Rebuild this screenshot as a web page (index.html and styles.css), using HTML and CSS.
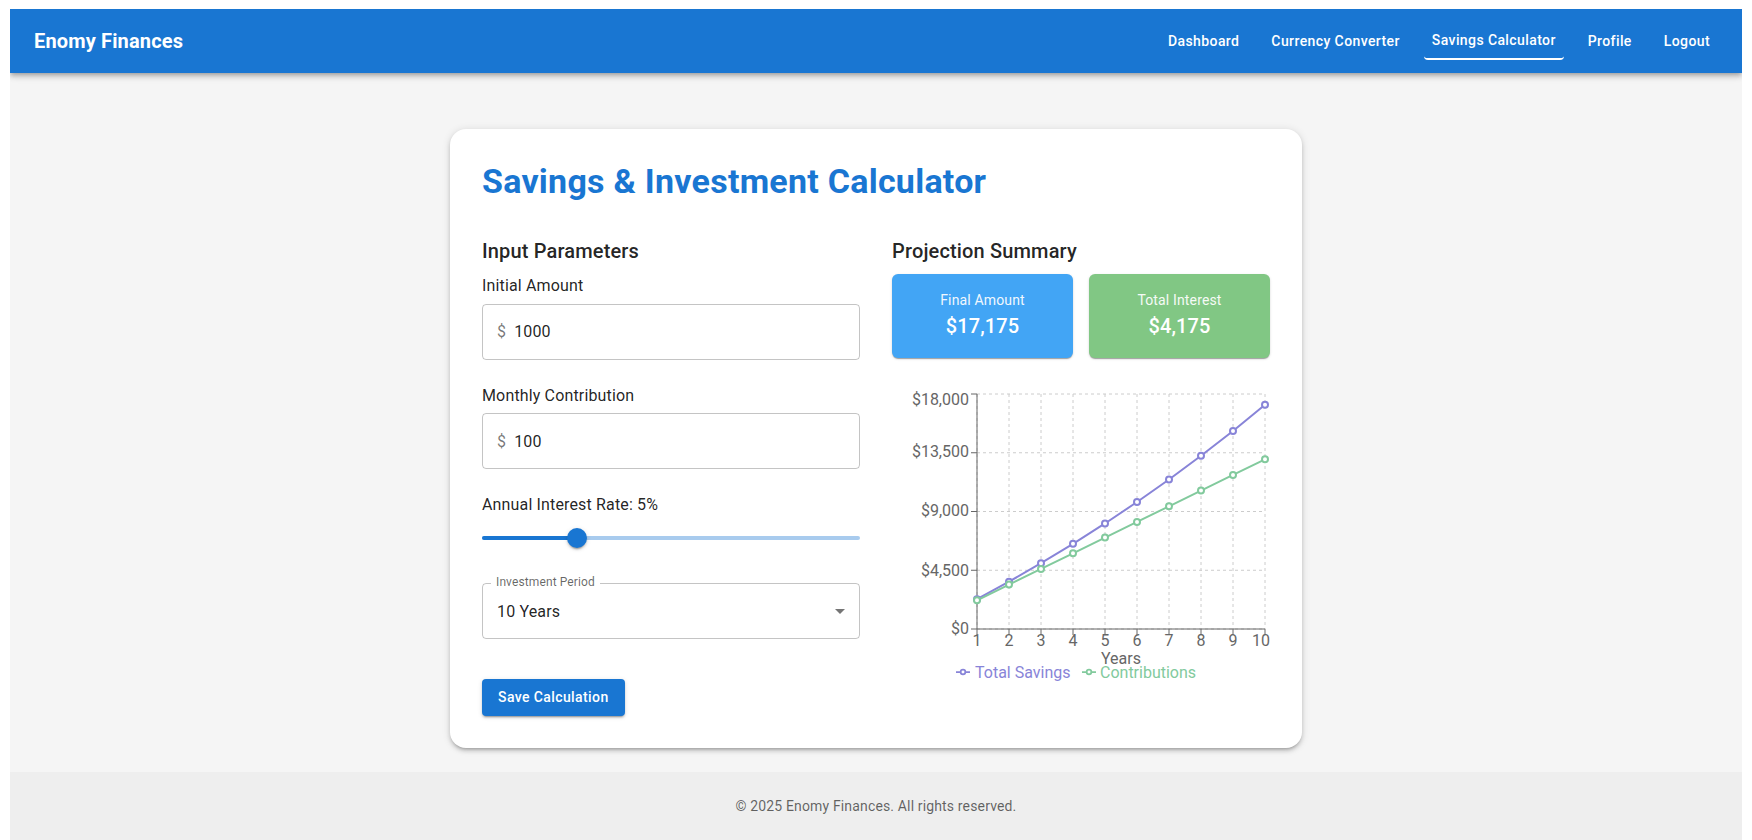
FILE: index.html
```html
<!DOCTYPE html>
<html lang="en">
<head>
<meta charset="utf-8">
<title>Enomy Finances - Savings Calculator</title>
<link rel="stylesheet" href="styles.css">
</head>
<body>
<div class="page">
  <header class="appbar">
    <div class="brand">Enomy Finances</div>
    <nav class="nav">
      <a class="nav-btn">Dashboard</a>
      <a class="nav-btn">Currency Converter</a>
      <a class="nav-btn active">Savings Calculator</a>
      <a class="nav-btn">Profile</a>
      <a class="nav-btn">Logout</a>
    </nav>
  </header>

  <main class="main">
    <section class="card">
      <h1 class="title">Savings &amp; Investment Calculator</h1>
      <div class="cols">
        <div class="col">
          <h2 class="section-title">Input Parameters</h2>

          <div class="field">
            <p class="field-label">Initial Amount</p>
            <div class="input"><span class="adorn">$</span><span class="value">1000</span></div>
          </div>

          <div class="field">
            <p class="field-label">Monthly Contribution</p>
            <div class="input"><span class="adorn">$</span><span class="value">100</span></div>
          </div>

          <div class="field">
            <p class="field-label">Annual Interest Rate: 5%</p>
            <div class="slider">
              <span class="rail"></span>
              <span class="track" style="width:25%"></span>
              <span class="thumb" style="left:25%"></span>
            </div>
          </div>

          <div class="select">
            <span class="select-label">Investment Period</span>
            <span class="value">10 Years</span>
            <svg class="select-arrow" width="24" height="24" viewBox="0 0 24 24"><path d="M7 10l5 5 5-5z"/></svg>
          </div>

          <button class="save-btn">Save Calculation</button>
        </div>

        <div class="col">
          <h2 class="section-title">Projection Summary</h2>
          <div class="summary">
            <div class="stat stat-blue">
              <div class="stat-label">Final Amount</div>
              <div class="stat-value">$17,175</div>
            </div>
            <div class="stat stat-green">
              <div class="stat-label">Total Interest</div>
              <div class="stat-value">$4,175</div>
            </div>
          </div>

          <svg class="chart" width="378" height="310" viewBox="0 0 378 310">
            <g class="grid">
              <line x1="85" y1="20" x2="373" y2="20"/>
              <line x1="85" y1="78.75" x2="373" y2="78.75"/>
              <line x1="85" y1="137.5" x2="373" y2="137.5"/>
              <line x1="85" y1="196.25" x2="373" y2="196.25"/>
              <line x1="85" y1="255" x2="373" y2="255"/>
              <line x1="85" y1="20" x2="85" y2="255"/>
              <line x1="117" y1="20" x2="117" y2="255"/>
              <line x1="149" y1="20" x2="149" y2="255"/>
              <line x1="181" y1="20" x2="181" y2="255"/>
              <line x1="213" y1="20" x2="213" y2="255"/>
              <line x1="245" y1="20" x2="245" y2="255"/>
              <line x1="277" y1="20" x2="277" y2="255"/>
              <line x1="309" y1="20" x2="309" y2="255"/>
              <line x1="341" y1="20" x2="341" y2="255"/>
              <line x1="373" y1="20" x2="373" y2="255"/>
            </g>
            <g class="axis">
              <line x1="85" y1="20" x2="85" y2="255"/>
              <line x1="85" y1="255" x2="373" y2="255"/>
              <line x1="79" y1="20" x2="85" y2="20"/>
              <line x1="79" y1="78.75" x2="85" y2="78.75"/>
              <line x1="79" y1="137.5" x2="85" y2="137.5"/>
              <line x1="79" y1="196.25" x2="85" y2="196.25"/>
              <line x1="79" y1="255" x2="85" y2="255"/>
              <line x1="85" y1="255" x2="85" y2="261"/>
              <line x1="117" y1="255" x2="117" y2="261"/>
              <line x1="149" y1="255" x2="149" y2="261"/>
              <line x1="181" y1="255" x2="181" y2="261"/>
              <line x1="213" y1="255" x2="213" y2="261"/>
              <line x1="245" y1="255" x2="245" y2="261"/>
              <line x1="277" y1="255" x2="277" y2="261"/>
              <line x1="309" y1="255" x2="309" y2="261"/>
              <line x1="341" y1="255" x2="341" y2="261"/>
              <line x1="373" y1="255" x2="373" y2="261"/>
            </g>
            <g class="tick-y">
              <text x="77" y="30.5">$18,000</text>
              <text x="77" y="83">$13,500</text>
              <text x="77" y="142">$9,000</text>
              <text x="77" y="201.5">$4,500</text>
              <text x="77" y="259.5">$0</text>
            </g>
            <g class="tick-x">
              <text x="85" y="272">1</text>
              <text x="117" y="272">2</text>
              <text x="149" y="272">3</text>
              <text x="181" y="272">4</text>
              <text x="213" y="272">5</text>
              <text x="245" y="272">6</text>
              <text x="277" y="272">7</text>
              <text x="309" y="272">8</text>
              <text x="341" y="272">9</text>
              <text x="369" y="272">10</text>
            </g>
            <text class="axis-label" x="229" y="289.5">Years</text>

            <polyline class="series-savings" points="85,225.24 117,207.69 149,189.24 181,169.85 213,149.46 245,128.03 277,105.5 309,81.82 341,56.93 373,30.77"/>
            <g class="dots-savings">
              <circle cx="85" cy="225.24" r="3"/>
              <circle cx="117" cy="207.69" r="3"/>
              <circle cx="149" cy="189.24" r="3"/>
              <circle cx="181" cy="169.85" r="3"/>
              <circle cx="213" cy="149.46" r="3"/>
              <circle cx="245" cy="128.03" r="3"/>
              <circle cx="277" cy="105.5" r="3"/>
              <circle cx="309" cy="81.82" r="3"/>
              <circle cx="341" cy="56.93" r="3"/>
              <circle cx="373" cy="30.77" r="3"/>
            </g>
            <polyline class="series-contrib" points="85,226.28 117,210.61 149,194.94 181,179.28 213,163.61 245,147.94 277,132.28 309,116.61 341,100.94 373,85.28"/>
            <g class="dots-contrib">
              <circle cx="85" cy="226.28" r="3"/>
              <circle cx="117" cy="210.61" r="3"/>
              <circle cx="149" cy="194.94" r="3"/>
              <circle cx="181" cy="179.28" r="3"/>
              <circle cx="213" cy="163.61" r="3"/>
              <circle cx="245" cy="147.94" r="3"/>
              <circle cx="277" cy="132.28" r="3"/>
              <circle cx="309" cy="116.61" r="3"/>
              <circle cx="341" cy="100.94" r="3"/>
              <circle cx="373" cy="85.28" r="3"/>
            </g>

            <g class="legend">
              <path class="legend-icon-savings" d="M64,298h4.67a2.33,2.33,0,1,1,4.67,0H78M73.33,298a2.33,2.33,0,1,1,-4.67,0"/>
              <text class="legend-savings" x="83" y="303.5">Total Savings</text>
              <path class="legend-icon-contrib" d="M190,298h4.67a2.33,2.33,0,1,1,4.67,0H204M199.33,298a2.33,2.33,0,1,1,-4.67,0"/>
              <text class="legend-contrib" x="208" y="303.5">Contributions</text>
            </g>
          </svg>
        </div>
      </div>
    </section>
  </main>

  <footer class="footer">© 2025 Enomy Finances. All rights reserved.</footer>
</div>
</body>
</html>
```

FILE: styles.css
```css
body {
  margin: 9px 10px;
  font-family: Roboto, "Liberation Sans", Arial, sans-serif;
  color: rgba(0, 0, 0, 0.87);
  background: #fff;
}

.page {
  display: flex;
  flex-direction: column;
}

/* ---------- App bar ---------- */
.appbar {
  position: relative;
  z-index: 1;
  height: 64px;
  display: flex;
  align-items: center;
  padding: 0 24px;
  background: #1976d2;
  color: #fff;
  box-shadow: 0px 2px 4px -1px rgba(0,0,0,0.2), 0px 4px 5px 0px rgba(0,0,0,0.14), 0px 1px 10px 0px rgba(0,0,0,0.12);
}

.brand {
  flex: 1;
  font-size: 20px;
  font-weight: 700;
  line-height: 1.6;
  letter-spacing: 0.0075em;
}

.nav {
  display: flex;
  align-items: center;
  gap: 16px;
}

.nav-btn {
  display: block;
  padding: 6px 8px;
  border-radius: 4px;
  font-size: 14px;
  font-weight: 500;
  line-height: 1.75;
  letter-spacing: 0.02857em;
  color: #fff;
  cursor: pointer;
}

.nav-btn.active {
  border-bottom: 2px solid #fff;
}

/* ---------- Main ---------- */
.main {
  background: #f5f5f5;
  padding: 56px 24px 24px;
  display: flex;
  justify-content: center;
}

.card {
  width: 852px;
  box-sizing: border-box;
  padding: 32px;
  background: #fff;
  border-radius: 16px;
  box-shadow: 0px 3px 3px -2px rgba(0,0,0,0.2), 0px 3px 4px 0px rgba(0,0,0,0.14), 0px 1px 8px 0px rgba(0,0,0,0.12);
}

.title {
  margin: 0 0 32px;
  font-size: 34px;
  font-weight: 700;
  line-height: 1.235;
  letter-spacing: 0.00735em;
  color: #1976d2;
}

.cols {
  display: grid;
  grid-template-columns: 1fr 1fr;
  column-gap: 32px;
}

.col {
  display: flex;
  flex-direction: column;
  min-width: 0;
}

.section-title {
  margin: 0 0 7px;
  font-size: 20px;
  font-weight: 500;
  line-height: 1.6;
  letter-spacing: 0.0075em;
}

.field {
  display: flex;
  flex-direction: column;
  margin-bottom: 24px;
}

.field-label {
  margin: 0 0 5.6px;
  font-size: 16px;
  line-height: 1.5;
  letter-spacing: 0.00938em;
}

.input {
  height: 56px;
  box-sizing: border-box;
  display: flex;
  align-items: center;
  padding: 0 14px;
  border: 1px solid rgba(0, 0, 0, 0.23);
  border-radius: 4px;
  font-size: 16px;
  letter-spacing: 0.00938em;
}

.adorn {
  margin-right: 8px;
  color: rgba(0, 0, 0, 0.54);
}

/* ---------- Slider ---------- */
.slider {
  position: relative;
  height: 30px;
  margin-bottom: 6.5px;
}

.rail,
.track {
  position: absolute;
  top: 13px;
  left: 0;
  height: 4px;
  border-radius: 12px;
  background: #1976d2;
}

.rail {
  right: 0;
  opacity: 0.38;
}

.thumb {
  position: absolute;
  top: 5px;
  width: 20px;
  height: 20px;
  margin-left: -10px;
  border-radius: 50%;
  background: #1976d2;
  box-shadow: 0px 3px 1px -2px rgba(0,0,0,0.2), 0px 2px 2px 0px rgba(0,0,0,0.14), 0px 1px 5px 0px rgba(0,0,0,0.12);
}

/* ---------- Select ---------- */
.select {
  position: relative;
  height: 56px;
  box-sizing: border-box;
  display: flex;
  align-items: center;
  padding: 0 7px 0 14px;
  margin-bottom: 40px;
  border: 1px solid rgba(0, 0, 0, 0.23);
  border-radius: 4px;
  font-size: 16px;
  letter-spacing: 0.00938em;
}

.select .value {
  flex: 1;
}

.select-label {
  position: absolute;
  top: -10px;
  left: 8px;
  padding: 0 5px;
  background: #fff;
  font-size: 12px;
  line-height: 16px;
  letter-spacing: 0.00938em;
  color: rgba(0, 0, 0, 0.6);
}

.select-arrow {
  fill: rgba(0, 0, 0, 0.54);
}

/* ---------- Button ---------- */
.save-btn {
  align-self: flex-start;
  padding: 6px 16px;
  border: 0;
  border-radius: 4px;
  background: #1976d2;
  color: #fff;
  font-family: Roboto, "Liberation Sans", Arial, sans-serif;
  font-size: 14px;
  font-weight: 500;
  line-height: 1.75;
  letter-spacing: 0.02857em;
  box-shadow: 0px 3px 1px -2px rgba(0,0,0,0.2), 0px 2px 2px 0px rgba(0,0,0,0.14), 0px 1px 5px 0px rgba(0,0,0,0.12);
  cursor: pointer;
}

/* ---------- Summary ---------- */
.summary {
  display: grid;
  grid-template-columns: 1fr 1fr;
  gap: 16px;
  margin-bottom: 16px;
}

.stat {
  padding: 16px;
  border-radius: 6px;
  color: #fff;
  text-align: center;
  box-shadow: 0px 2px 1px -1px rgba(0,0,0,0.2), 0px 1px 1px 0px rgba(0,0,0,0.14), 0px 1px 3px 0px rgba(0,0,0,0.12);
}

.stat-blue {
  background: #42a5f5;
}

.stat-green {
  background: #81c784;
}

.stat-label {
  font-size: 14px;
  line-height: 1.43;
  letter-spacing: 0.01071em;
  opacity: 0.92;
}

.stat-value {
  font-size: 20px;
  font-weight: 500;
  line-height: 1.6;
  letter-spacing: 0.0075em;
}

/* ---------- Chart ---------- */
.chart {
  display: block;
  font-family: Roboto, "Liberation Sans", Arial, sans-serif;
  font-size: 16px;
}

.grid line {
  stroke: #ccc;
  stroke-dasharray: 3 3;
  stroke-width: 1;
}

.axis line {
  stroke: #666;
  stroke-width: 1;
}

.tick-y text {
  fill: #666;
  text-anchor: end;
}

.tick-x text {
  fill: #666;
  text-anchor: middle;
}

.axis-label {
  fill: #666;
  text-anchor: middle;
}

.series-savings,
.series-contrib {
  fill: none;
  stroke-width: 2;
  stroke-linejoin: round;
}

.series-savings {
  stroke: #8884d8;
}

.series-contrib {
  stroke: #82ca9d;
}

.dots-savings circle,
.dots-contrib circle {
  fill: #fff;
  stroke-width: 2;
}

.dots-savings circle {
  stroke: #8884d8;
}

.dots-contrib circle {
  stroke: #82ca9d;
}

.legend-icon-savings,
.legend-icon-contrib {
  fill: none;
  stroke-width: 1.75;
}

.legend-icon-savings {
  stroke: #8884d8;
}

.legend-icon-contrib {
  stroke: #82ca9d;
}

.legend-savings {
  fill: #8884d8;
}

.legend-contrib {
  fill: #82ca9d;
}

/* ---------- Footer ---------- */
.footer {
  padding: 24px;
  background: #eeeeee;
  text-align: center;
  font-size: 14px;
  line-height: 1.43;
  letter-spacing: 0.01071em;
  color: rgba(0, 0, 0, 0.6);
}
```
